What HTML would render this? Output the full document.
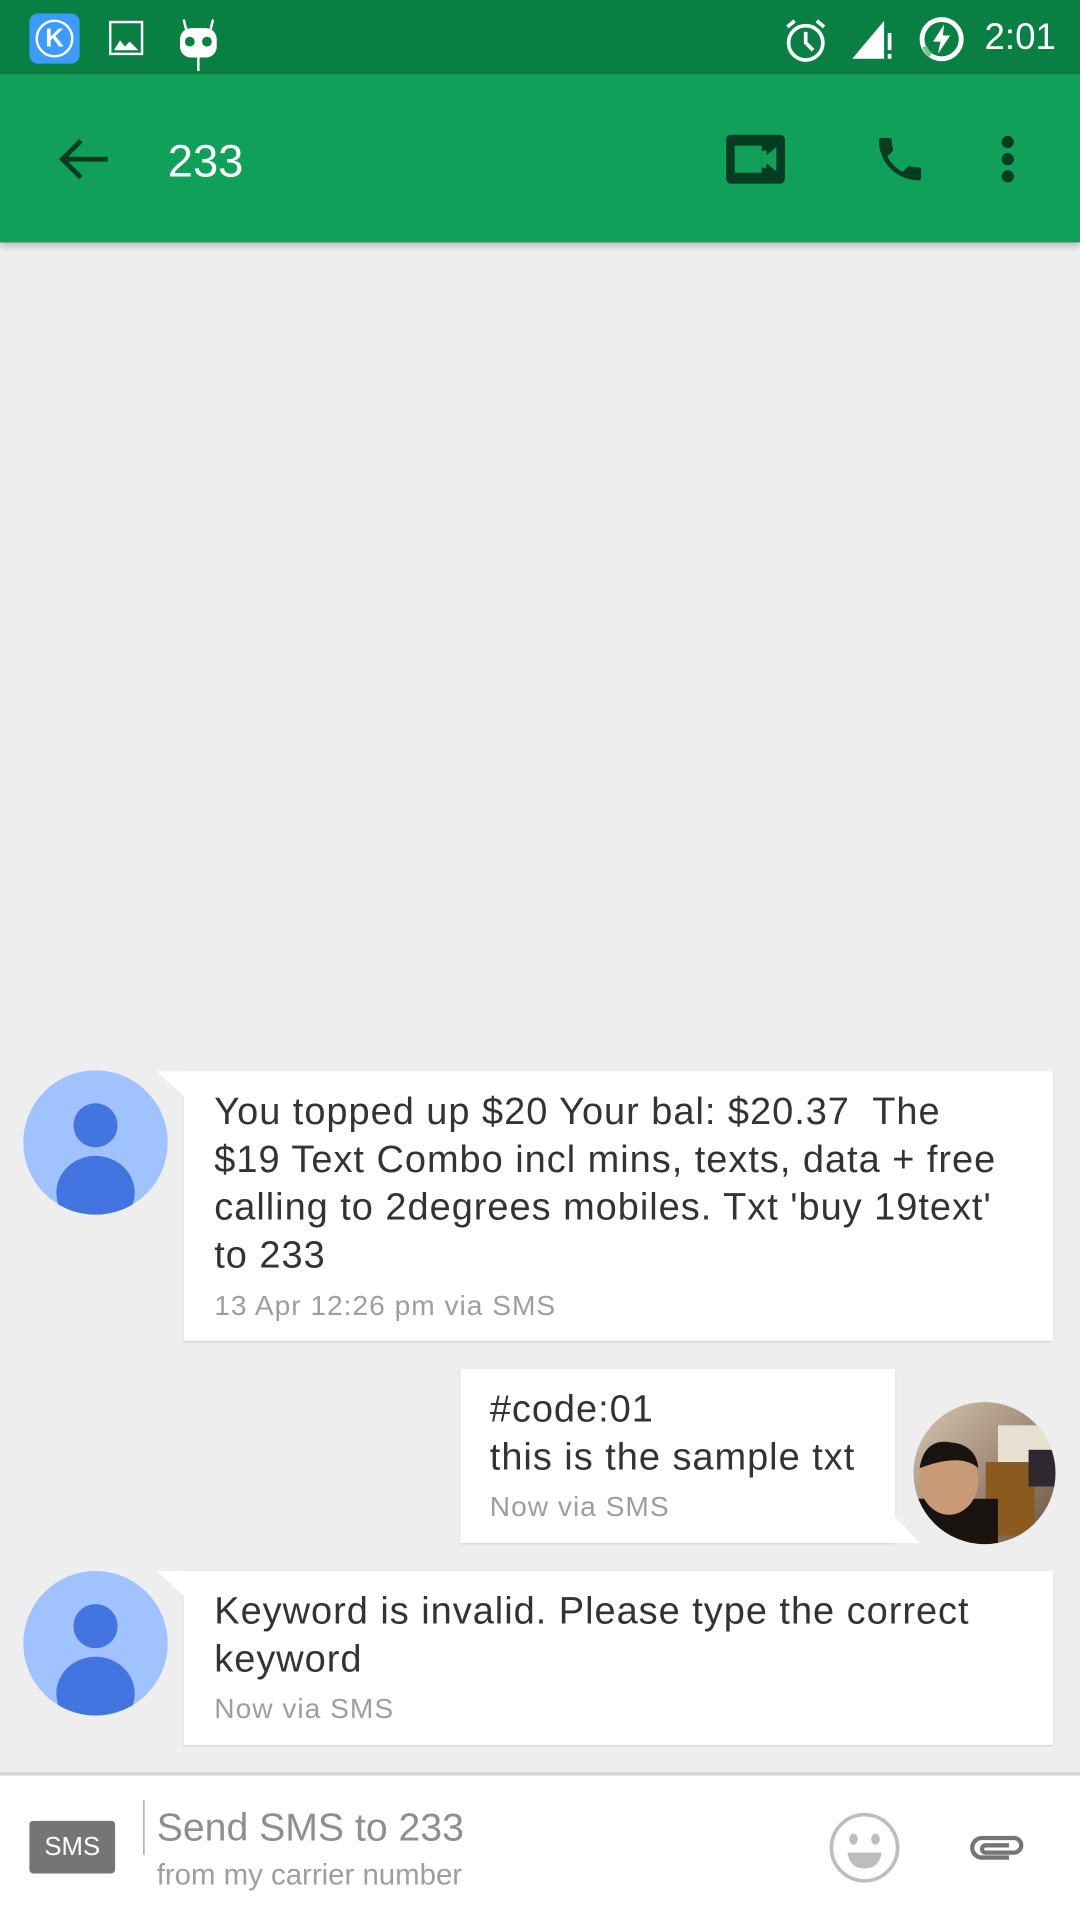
<!DOCTYPE html>
<html><head><meta charset="utf-8">
<style>
html,body{margin:0;padding:0;width:1080px;height:1920px;overflow:hidden;background:#eeeeee;}
#c{position:absolute;left:0;top:0;width:882px;height:1568px;transform:scale(1.22449);transform-origin:0 0;font-family:"Liberation Sans",sans-serif;background:#eeeeee;}
.abs{position:absolute;}
.sb{left:0;top:0;width:882px;height:61px;background:#0a7f43;}
.tb{left:0;top:61px;width:882px;height:137px;background:#11a05a;box-shadow:0 3px 6px rgba(0,0,0,0.25);}
.bub{background:#fff;box-shadow:0 1px 2px rgba(0,0,0,0.15);}
.txt{font-size:31px;letter-spacing:0.8px;line-height:39px;color:#333;white-space:nowrap;}
.ts{font-size:23px;letter-spacing:0.8px;color:#9e9e9e;white-space:nowrap;}
</style></head><body><div id="c">
<div class="abs sb"></div>
<div class="abs" style="left:24px;top:11px;width:41px;height:41px;background:#3d9bff;border-radius:7px;"></div>
<div class="abs" style="left:29px;top:16px;width:27px;height:27px;border:2px solid #fff;border-radius:50%;color:#fff;font-size:21px;font-weight:bold;text-align:center;line-height:27px;">K</div>
<svg class="abs" style="left:88px;top:16px" width="30" height="30" viewBox="0 0 30 30"><rect x="2" y="2" width="26" height="26" fill="none" stroke="#fff" stroke-width="2"/><path d="M5 25 L10 17 L14 22 L18 18 L25 25 Z" fill="#fff"/></svg>
<svg class="abs" style="left:144px;top:14px" width="36" height="48" viewBox="0 0 36 48"><path d="M6 2 L8 10 M30 2 L28 10" stroke="#fff" stroke-width="2"/><rect x="3" y="9" width="30" height="24" rx="9" fill="#fff"/><circle cx="11" cy="20" r="4" fill="#0a7f43"/><circle cx="25" cy="20" r="4" fill="#0a7f43"/><rect x="17" y="33" width="2" height="11" fill="#fff"/></svg>
<svg class="abs" style="left:638px;top:13px" width="40" height="40" viewBox="0 0 40 40"><circle cx="20" cy="22" r="14" fill="none" stroke="#fff" stroke-width="3"/><path d="M20 13 V22 L26 28" stroke="#fff" stroke-width="3" fill="none"/><path d="M5 9 L11 4 M35 9 L29 4" stroke="#fff" stroke-width="3"/></svg>
<svg class="abs" style="left:694px;top:15px" width="38" height="34" viewBox="0 0 38 34"><path d="M2 33 L28 2 V33 Z" fill="#fff"/><rect x="31" y="12" width="3" height="14" fill="#fff"/><rect x="31" y="29" width="3" height="4" fill="#fff"/></svg>
<svg class="abs" style="left:749px;top:12px" width="40" height="40" viewBox="0 0 40 40"><circle cx="20" cy="20" r="16" fill="none" stroke="#fff" stroke-width="4"/><path d="M11 33 A16 16 0 0 1 6 26" stroke="#7fbf95" stroke-width="4" fill="none"/><path d="M22 8 L13 22 H19 L17 32 L27 17 H21 Z" fill="#fff"/></svg>
<div class="abs" style="left:804px;top:14px;font-size:30px;color:#fff;">2:01</div>
<div class="abs tb"></div>
<svg class="abs" style="left:46px;top:110px" width="44" height="40" viewBox="0 0 44 40"><path d="M42 20 H6 M20 5 L5 20 L20 35" stroke="#063d22" stroke-width="4" fill="none"/></svg>
<div class="abs" style="left:137px;top:111px;font-size:37px;color:#fff;">233</div>
<svg class="abs" style="left:592px;top:109px" width="50" height="42" viewBox="0 0 50 42"><rect x="1" y="1" width="48" height="40" rx="4" fill="#063d22"/><rect x="8" y="10" width="22" height="22" fill="#11a05a"/><path d="M30 21 L42 11 V31 Z" fill="#11a05a"/><rect x="30" y="14" width="4" height="14" fill="#11a05a"/></svg>
<svg class="abs" style="left:710px;top:107px" width="50" height="46" viewBox="0 0 24 24"><path d="M6.62 10.79c1.44 2.830 3.76 5.14 6.59 6.59l2.2-2.2c.27-.27.67-.36 1.02-.24 1.12.37 2.33.57 3.570.57.55 0 1 .45 1 1V20c0 .55-.45 1-1 1-9.39 0-17-7.61-17-17 0-.55.45-1 1-1h3.5c.55 0 1 .45 1 1 0 1.25.2 2.45.57 3.57.11.35.03.74-.25 1.02l-2.2 2.2z" fill="#063d22"/></svg>
<div class="abs" style="left:818px;top:111px;width:10px;height:10px;border-radius:50%;background:#063d22;"></div>
<div class="abs" style="left:818px;top:125px;width:10px;height:10px;border-radius:50%;background:#063d22;"></div>
<div class="abs" style="left:818px;top:139px;width:10px;height:10px;border-radius:50%;background:#063d22;"></div>

<svg class="abs" style="left:19px;top:874px" width="118" height="118" viewBox="0 0 118 118"><defs><clipPath id="a1"><circle cx="59" cy="59" r="59"/></clipPath></defs><circle cx="59" cy="59" r="59" fill="#a0c3ff"/><circle cx="59" cy="45" r="18" fill="#4374e0"/><rect x="27" y="70" width="64" height="60" rx="32" fill="#4374e0" clip-path="url(#a1)"/></svg>
<div class="abs bub" style="left:150px;top:875px;width:710px;height:220px;"></div>
<svg class="abs" style="left:128px;top:875px" width="24" height="24"><path d="M0 0 H24 V22 Z" fill="#fff"/></svg>
<div class="abs txt" style="left:175px;top:888px;">You topped up $20 Your bal: $20.37&nbsp; The<br>$19 Text Combo incl mins, texts, data + free<br>calling to 2degrees mobiles. Txt 'buy 19text'<br>to 233</div>
<div class="abs ts" style="left:175px;top:1053px;">13 Apr 12:26 pm via SMS</div>

<div class="abs bub" style="left:376px;top:1118px;width:355px;height:142px;"></div>
<svg class="abs" style="left:729px;top:1237px" width="24" height="24"><path d="M0 0 L22 23 H0 Z" fill="#fff"/></svg>
<div class="abs txt" style="left:400px;top:1131px;">#code:01<br>this is the sample txt</div>
<div class="abs ts" style="left:400px;top:1217px;">Now via SMS</div>
<svg class="abs" style="left:745px;top:1144px" width="118" height="118" viewBox="0 0 118 118"><defs><clipPath id="p"><circle cx="59" cy="59" r="58"/></clipPath><linearGradient id="g" x1="0" y1="0" x2="1" y2="1"><stop offset="0" stop-color="#d8c7b2"/><stop offset="1" stop-color="#6a5240"/></linearGradient></defs><g clip-path="url(#p)"><rect width="118" height="118" fill="url(#g)"/><rect x="70" y="20" width="48" height="50" fill="#e8e0d0"/><rect x="60" y="50" width="40" height="60" fill="#8a5a20"/><rect x="0" y="80" width="70" height="40" fill="#1a1410"/><ellipse cx="30" cy="65" rx="24" ry="28" fill="#c89a78"/><path d="M6 55 Q10 30 32 34 Q52 36 54 55 Q40 42 6 55Z" fill="#1a1410"/><rect x="95" y="40" width="23" height="30" fill="#302830"/></g></svg>

<svg class="abs" style="left:19px;top:1283px" width="118" height="118" viewBox="0 0 118 118"><defs><clipPath id="a3"><circle cx="59" cy="59" r="59"/></clipPath></defs><circle cx="59" cy="59" r="59" fill="#a0c3ff"/><circle cx="59" cy="45" r="18" fill="#4374e0"/><rect x="27" y="70" width="64" height="60" rx="32" fill="#4374e0" clip-path="url(#a3)"/></svg>
<div class="abs bub" style="left:150px;top:1283px;width:710px;height:142px;"></div>
<svg class="abs" style="left:128px;top:1283px" width="24" height="24"><path d="M0 0 H24 V22 Z" fill="#fff"/></svg>
<div class="abs txt" style="left:175px;top:1296px;">Keyword is invalid. Please type the correct<br>keyword</div>
<div class="abs ts" style="left:175px;top:1382px;">Now via SMS</div>

<div class="abs" style="left:0;top:1447px;width:882px;height:3px;background:#d6d6d6;"></div>
<div class="abs" style="left:0;top:1450px;width:882px;height:118px;background:#fff;"></div>
<div class="abs" style="left:24px;top:1487px;width:70px;height:43px;background:#757575;border-radius:3px;color:#fff;font-size:21px;text-align:center;line-height:43px;">SMS</div>
<div class="abs" style="left:117px;top:1470px;width:1px;height:45px;background:#999;"></div>
<div class="abs" style="left:128px;top:1474px;font-size:32px;color:#8e8e8e;">Send SMS to 233</div>
<div class="abs" style="left:128px;top:1518px;font-size:24px;color:#9e9e9e;">from my carrier number</div>
<svg class="abs" style="left:676px;top:1479px" width="60" height="60" viewBox="0 0 60 60"><circle cx="30" cy="30" r="27" fill="none" stroke="#bdbdbd" stroke-width="3"/><ellipse cx="21" cy="23" rx="3.5" ry="4.5" fill="#bdbdbd"/><ellipse cx="39" cy="23" rx="3.5" ry="4.5" fill="#bdbdbd"/><path d="M16 34 H44 Q42 47 30 47 Q18 47 16 34Z" fill="#bdbdbd"/></svg>
<svg class="abs" style="left:788px;top:1494px" width="52" height="32" viewBox="0 0 52 32"><path d="M36 23 H14 A8 8 0 0 1 14 7 H40 A6 6 0 0 1 40 19 H17 A3 3 0 0 1 17 13 H36" fill="none" stroke="#757575" stroke-width="3.5"/></svg>
</div></body></html>
